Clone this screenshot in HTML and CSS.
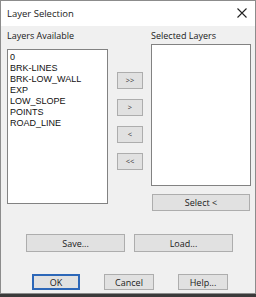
FILE: index.html
```html
<!DOCTYPE html>
<html lang="en">
<head>
    <meta charset="UTF-8">
    <title>Layer Selection</title>
    <link rel="stylesheet" href="styles.css">
</head>
<body>
    <div class="window">
        <div class="titlebar">
            <span class="title">Layer Selection</span>
            <svg class="close" width="10" height="10" viewBox="0 0 10 10">
                <path d="M0.5 0.5 L9.5 9.5 M9.5 0.5 L0.5 9.5" stroke="#222" stroke-width="1.1" fill="none"/>
            </svg>
        </div>

        <div class="content">
            <div class="lists">
                <div class="col left">
                    <div class="label">Layers Available</div>
                    <div class="listbox available">
                        <div class="item">0</div>
                        <div class="item">BRK-LINES</div>
                        <div class="item">BRK-LOW_WALL</div>
                        <div class="item">EXP</div>
                        <div class="item">LOW_SLOPE</div>
                        <div class="item">POINTS</div>
                        <div class="item">ROAD_LINE</div>
                    </div>
                </div>

                <div class="arrows">
                    <button class="btn arrow">&gt;&gt;</button>
                    <button class="btn arrow">&gt;</button>
                    <button class="btn arrow">&lt;</button>
                    <button class="btn arrow">&lt;&lt;</button>
                </div>

                <div class="col right">
                    <div class="label">Selected Layers</div>
                    <div class="listbox selected"></div>
                    <button class="btn select">Select &lt;</button>
                </div>
            </div>

            <div class="row files">
                <button class="btn wide">Save...</button>
                <button class="btn wide">Load...</button>
            </div>

            <div class="row actions">
                <button class="btn small default">OK</button>
                <button class="btn small">Cancel</button>
                <button class="btn small">Help...</button>
            </div>
        </div>
    </div>
</body>
</html>
```

FILE: styles.css
```css
body {
    margin: 0;
    background: #3a3a3a;
    font-family: "Open Sans", "Noto Sans", sans-serif;
    color: #1a1a1a;
}
.window {
    width: 256px;
    height: 294px;
    box-sizing: border-box;
    border: 1px solid #8c8c8c;
    background: #f0f0f0;
    display: flex;
    flex-direction: column;
}
.titlebar {
    height: 25px;
    background: #fff;
    display: flex;
    align-items: center;
    justify-content: space-between;
    padding: 0 8px 0 6px;
}
.title {
    font-size: 9.5px;
}
.close {
    margin-top: -1px;
}
.content {
    flex: 1;
    display: flex;
    flex-direction: column;
}
.lists {
    display: flex;
    height: 185px;
}
.col {
    display: flex;
    flex-direction: column;
}
.left {
    margin-left: 6px;
    width: 101px;
}
.right {
    margin-left: 8px;
    width: 100px;
}
.label {
    font-size: 9px;
    height: 14px;
    line-height: 14px;
    margin-top: 3px;
}
.listbox {
    box-sizing: border-box;
    background: #fff;
    border: 1px solid #828282;
}
.available {
    margin-top: 6px;
    height: 155px;
    padding: 2px 0 0 2px;
}
.selected {
    margin-top: 1px;
    height: 143px;
}
.item {
    font-family: "Liberation Sans", Arial, sans-serif;
    font-size: 9px;
    line-height: 11px;
    color: #111;
}
.btn {
    box-sizing: border-box;
    background: #e1e1e1;
    border: 1px solid #adadad;
    font-family: "Open Sans", "Noto Sans", sans-serif;
    font-size: 9px;
    color: #1a1a1a;
    padding: 0;
    line-height: 1;
}
.arrows {
    display: flex;
    flex-direction: column;
    gap: 10px;
    margin-left: 9px;
    padding-top: 46px;
}
.arrow {
    width: 26px;
    height: 17px;
    font-size: 7.5px;
    color: #333;
}
.select {
    margin-top: 8px;
    margin-left: 1px;
    width: 98px;
    height: 17px;
}
.row {
    display: flex;
}
.files {
    margin-top: 23px;
    margin-left: 25px;
    gap: 9px;
}
.wide {
    width: 99px;
    height: 18px;
}
.actions {
    margin-top: 22px;
    margin-left: 31px;
}
.small {
    width: 50px;
    height: 16px;
}
.small + .small {
    margin-left: 24px;
}
.default {
    width: 48px;
    border: 2px solid #2c67b8;
}
```
